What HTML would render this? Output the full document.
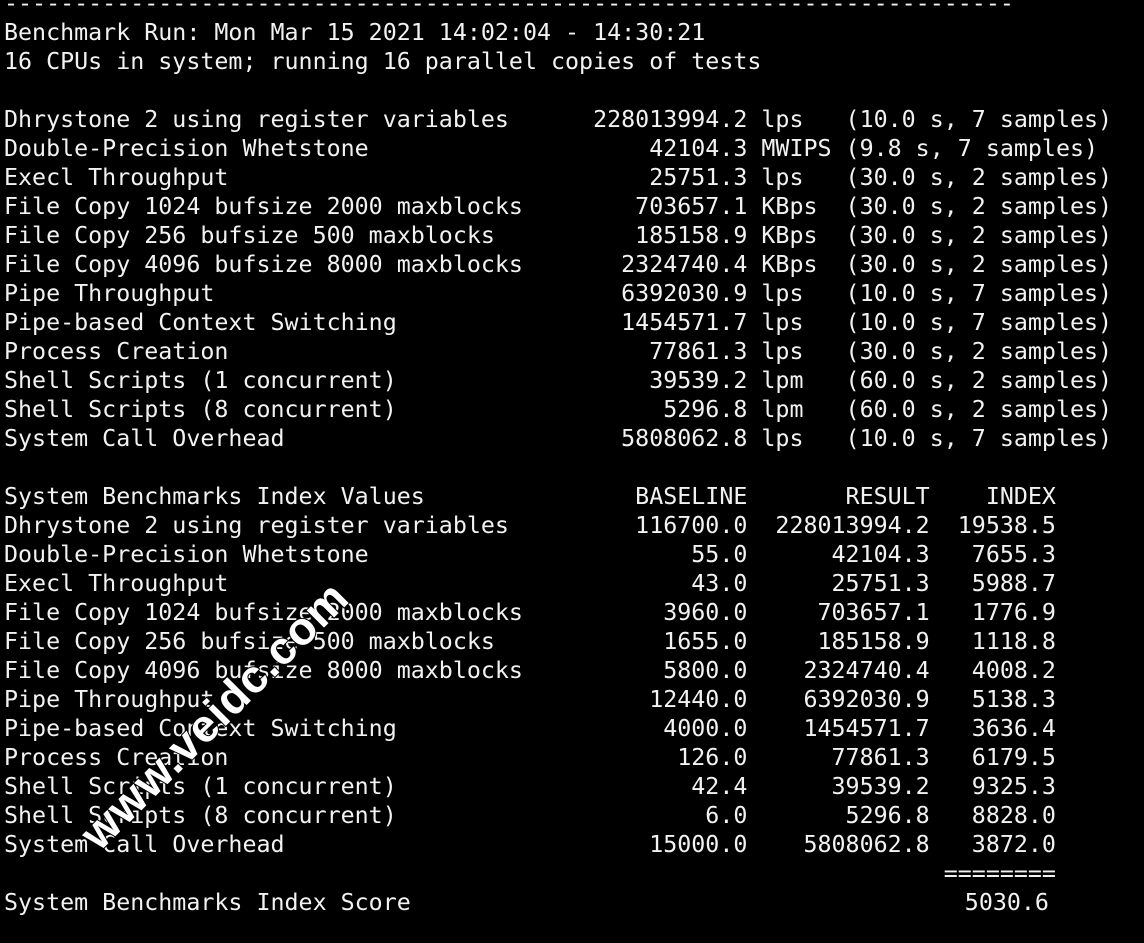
<!DOCTYPE html>
<html><head><meta charset="utf-8"><style>
html,body{margin:0;padding:0;background:#000;width:1144px;height:943px;overflow:hidden}
pre{position:absolute;left:4px;top:-11px;margin:0;font-family:"DejaVu Sans Mono","Liberation Mono",monospace;font-size:23.3px;line-height:29px;color:#f2f2f2;white-space:pre}
.s{position:relative;left:-7px}
.wm{position:absolute;left:214px;top:715px;transform:translate(-50%,-50%) rotate(-45deg);font-family:"Liberation Sans",sans-serif;font-weight:bold;font-size:46px;color:#fff;-webkit-text-stroke:2px #000;paint-order:stroke fill;white-space:nowrap;letter-spacing:1px}
</style></head><body>
<pre>------------------------------------------------------------------------
Benchmark Run: Mon Mar 15 2021 14:02:04 - 14:30:21
16 CPUs in system; running 16 parallel copies of tests

Dhrystone 2 using register variables      228013994.2 lps   (10.0 s, 7 samples)
Double-Precision Whetstone                    42104.3 MWIPS (9.8 s, 7 samples)
Execl Throughput                              25751.3 lps   (30.0 s, 2 samples)
File Copy 1024 bufsize 2000 maxblocks        703657.1 KBps  (30.0 s, 2 samples)
File Copy 256 bufsize 500 maxblocks          185158.9 KBps  (30.0 s, 2 samples)
File Copy 4096 bufsize 8000 maxblocks       2324740.4 KBps  (30.0 s, 2 samples)
Pipe Throughput                             6392030.9 lps   (10.0 s, 7 samples)
Pipe-based Context Switching                1454571.7 lps   (10.0 s, 7 samples)
Process Creation                              77861.3 lps   (30.0 s, 2 samples)
Shell Scripts (1 concurrent)                  39539.2 lpm   (60.0 s, 2 samples)
Shell Scripts (8 concurrent)                   5296.8 lpm   (60.0 s, 2 samples)
System Call Overhead                        5808062.8 lps   (10.0 s, 7 samples)

System Benchmarks Index Values               BASELINE       RESULT    INDEX
Dhrystone 2 using register variables         116700.0  228013994.2  19538.5
Double-Precision Whetstone                       55.0      42104.3   7655.3
Execl Throughput                                 43.0      25751.3   5988.7
File Copy 1024 bufsize 2000 maxblocks          3960.0     703657.1   1776.9
File Copy 256 bufsize 500 maxblocks            1655.0     185158.9   1118.8
File Copy 4096 bufsize 8000 maxblocks          5800.0    2324740.4   4008.2
Pipe Throughput                               12440.0    6392030.9   5138.3
Pipe-based Context Switching                   4000.0    1454571.7   3636.4
Process Creation                                126.0      77861.3   6179.5
Shell Scripts (1 concurrent)                     42.4      39539.2   9325.3
Shell Scripts (8 concurrent)                      6.0       5296.8   8828.0
System Call Overhead                          15000.0    5808062.8   3872.0
                                                                   ========
System Benchmarks Index Score                                        <span class="s">5030.6</span></pre>
<div class="wm">www.veidc.com</div>
</body></html>
